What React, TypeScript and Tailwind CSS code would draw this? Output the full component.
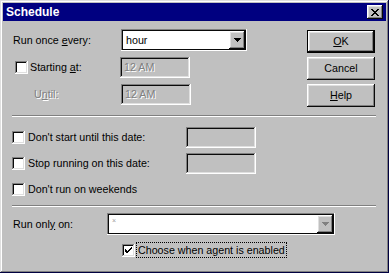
import React from "react";

const raised = "shadow-[inset_-1px_-1px_#0a0a0a,inset_1px_1px_#ffffff,inset_-2px_-2px_#808080,inset_2px_2px_#dfdfdf]";
const sunken = "shadow-[inset_-1px_-1px_#ffffff,inset_1px_1px_#808080,inset_-2px_-2px_#dfdfdf,inset_2px_2px_#0a0a0a]";
const comboEdge = "shadow-[inset_-1px_-1px_#ffffff,inset_1px_1px_#808080,inset_-2px_-2px_#0a0a0a,inset_2px_2px_#0a0a0a]";
const disabledText = "text-[#808080] [text-shadow:1px_1px_0_#ffffff]";

const Arrow = ({ disabled = false }: { disabled?: boolean }) => (
  <div className={`flex h-full w-[16px] items-center justify-center bg-[#c0c0c0] ${raised}`}>
    <svg width="7" height="4" viewBox="0 0 7 4">
      <path d="M0 0h7v1H0zM1 1h5v1H1zM2 2h3v1H2zM3 3h1v1H3z" fill={disabled ? "#808080" : "#000"} />
    </svg>
  </div>
);

const Combo = ({ className, children, disabled = false }: { className: string; children?: React.ReactNode; disabled?: boolean }) => (
  <div className={`flex h-[22px] bg-white p-[2px] ${comboEdge} ${className}`}>
    <div className="flex flex-1 items-center pl-[3px]">{children}</div>
    <Arrow disabled={disabled} />
  </div>
);

const Field = ({ value, disabled = false }: { value?: string; disabled?: boolean }) => (
  <div className={`flex h-[21px] w-[70px] items-center pl-[4px] bg-[#c0c0c0] ${sunken} ${disabled ? disabledText : ""}`}>
    {value}
  </div>
);

const Check = ({ checked = false }: { checked?: boolean }) => (
  <div className={`flex h-[13px] w-[13px] shrink-0 items-center justify-center bg-white ${sunken}`}>
    {checked && (
      <svg width="7" height="7" viewBox="0 0 7 7">
        <path d="M6 0h1v1H6zM5 1h2v1H5zM0 2h1v1H0zM4 2h2v1H4zM0 3h2v1H0zM3 3h2v1H3zM0 4h4v1H0zM1 5h2v1H1zM2 5h1v1H2z" fill="#000" />
      </svg>
    )}
  </div>
);

const Button = ({ children, isDefault = false }: { children: React.ReactNode; isDefault?: boolean }) => (
  <div className={`h-[23px] w-[68px] ${isDefault ? "border border-black" : ""}`}>
    <div className={`flex h-full w-full items-center justify-center bg-[#c0c0c0] ${raised}`}>{children}</div>
  </div>
);

const Separator = () => (
  <div className="-mx-[1px] h-[2px] border-t border-b border-t-[#808080] border-b-white" />
);

export default function App() {
  return (
    <div className="h-[273px] w-[389px] bg-[#c0c0c0] p-[3px] text-[10.7px] leading-none text-black shadow-[inset_-1px_-1px_#000040,inset_1px_1px_#dfdfdf,inset_-2px_-2px_#808080,inset_2px_2px_#ffffff]" style={{ fontFamily: '"Liberation Sans", Arial, sans-serif' }}>
      {/* title bar */}
      <div className="flex h-[18px] items-center justify-between bg-[#000080] pl-[3px] pr-[3px]">
        <span className="text-[12px] font-bold text-white">Schedule</span>
        <div className={`flex h-[14px] w-[16px] items-center justify-center bg-[#c0c0c0] ${raised}`}>
          <svg width="8" height="7" viewBox="0 0 8 7">
            <path d="M0 0h2v1H0zM6 0h2v1H6zM1 1h2v1H1zM5 1h2v1H5zM2 2h4v1H2zM3 3h2v1H3zM2 4h4v1H2zM1 5h2v1H1zM5 5h2v1H5zM0 6h2v1H0zM6 6h2v1H6z" fill="#000" />
          </svg>
        </div>
      </div>

      <div className="flex flex-col pl-[10px] pr-[11px] pt-[8px]">
        {/* schedule section */}
        <div className="flex">
          <div className="flex flex-1 flex-col gap-[5px]">
            <div className="flex h-[22px] items-center">
              <span className="w-[108px]">Run once <u>e</u>very:</span>
              <Combo className="w-[126px]">hour</Combo>
            </div>
            <div className="flex h-[22px] items-center">
              <div className="flex w-[107px] items-center gap-[2px] pl-[2px]">
                <Check />
                <span>Starting <u>a</u>t:</span>
              </div>
              <Field value="12 AM" disabled />
            </div>
            <div className="flex h-[22px] items-center">
              <span className={`w-[108px] pl-[21px] ${disabledText}`}>U<u>n</u>til:</span>
              <Field value="12 AM" disabled />
            </div>
          </div>
          <div className="flex w-[68px] flex-col gap-[4px] pt-[1px]">
            <Button isDefault><u>O</u>K</Button>
            <Button>Cancel</Button>
            <Button><u>H</u>elp</Button>
          </div>
        </div>

        <div className="mt-[8px]"><Separator /></div>

        {/* date section */}
        <div className="mt-[10px] flex flex-col gap-[5px]">
          <div className="flex h-[21px] items-center">
            <div className="-ml-[1px] flex w-[174px] items-center gap-[3px]">
              <Check />
              <span>Don't start until this date:</span>
            </div>
            <Field />
          </div>
          <div className="flex h-[21px] items-center">
            <div className="-ml-[1px] flex w-[174px] items-center gap-[3px]">
              <Check />
              <span>Stop running on this date:</span>
            </div>
            <Field />
          </div>
          <div className="flex h-[21px] items-center">
            <div className="-ml-[1px] flex items-center gap-[3px]">
              <Check />
              <span>Don't run on weekends</span>
            </div>
          </div>
        </div>

        <div className="mt-[5px]"><Separator /></div>

        {/* run only on */}
        <div className="mt-[6px] flex h-[22px] items-center">
          <span className="w-[94px]">Run onl<u>y</u> on:</span>
          <Combo className="w-[228px]" disabled>
            <span className="-mt-[8px] text-[7px] text-[#a0a0a0]">×</span>
          </Combo>
        </div>
        <div className="mt-[7px] flex h-[16px] items-center pl-[109px]">
          <Check checked />
          <span className="ml-[1px] flex h-[16px] items-center border border-dotted border-black px-[1px]">Choose when agent is enabled</span>
        </div>
      </div>
    </div>
  );
}
